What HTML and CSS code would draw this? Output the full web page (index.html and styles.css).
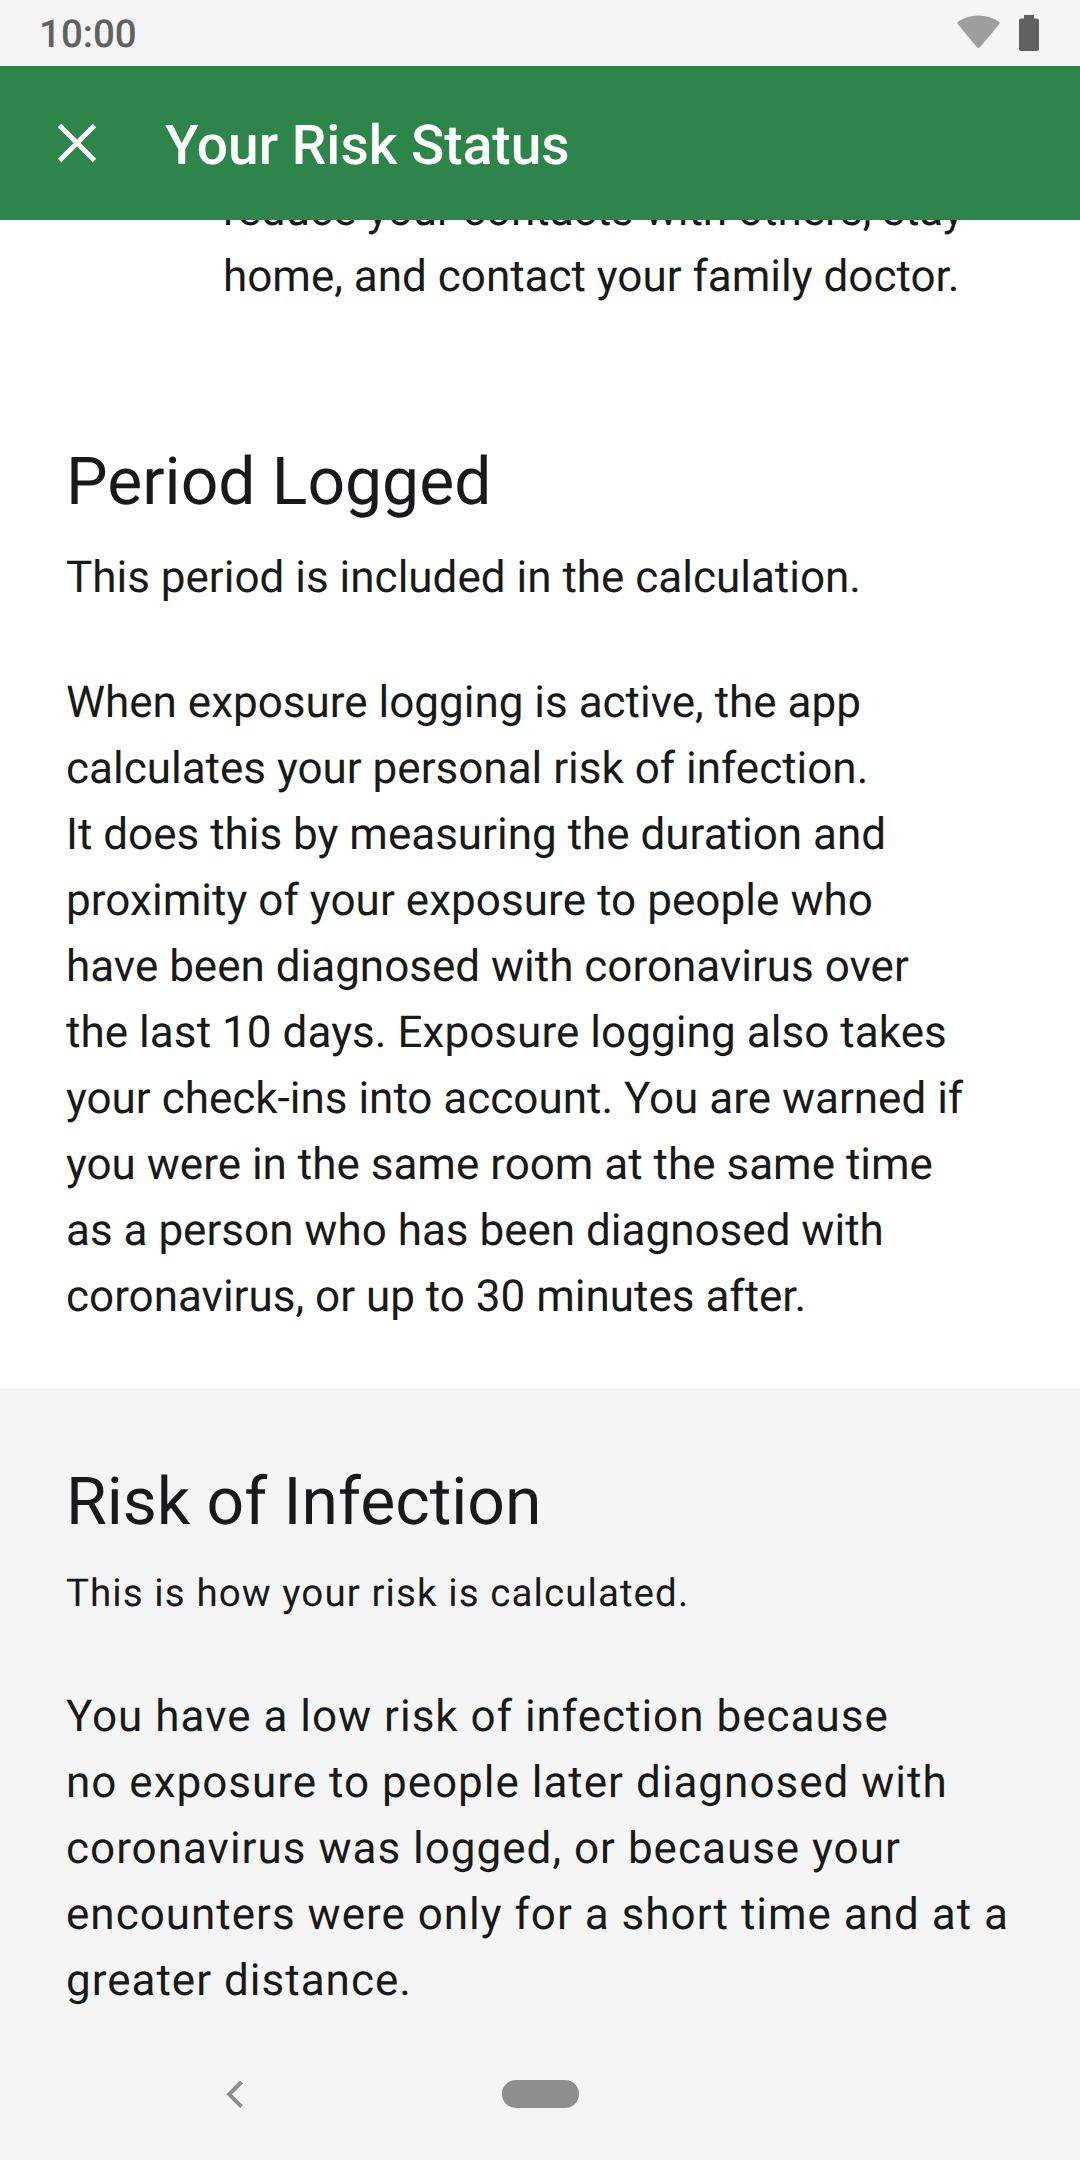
FILE: index.html
```html
<!DOCTYPE html>
<html lang="en">
<head>
<meta charset="utf-8">
<title>Your Risk Status</title>
<link rel="stylesheet" href="styles.css">
</head>
<body>
<div class="screen">
  <div class="status-bar">
    <span class="clock">10:00</span>
    <svg class="status-icons" width="84" height="40" viewBox="0 0 84 40"><path fill="#9e9e9e" d="M2.300 6.500C14-1.500 31-1.500 42.700 6.500Q44.300 7.800 43 9.500L24 32.300Q22.500 33.800 21 32.300L2 9.500Q.7 7.800 2.300 6.500Z"/><path fill="#616161" d="M63 5.500a2 2 0 0 1 2-2h3V0h10v3.500h3a2 2 0 0 1 2 2V34a2 2 0 0 1-2 2H65a2 2 0 0 1-2-2Z"/></svg>
  </div>
  <header class="app-bar">
    <svg class="close" width="40" height="40" viewBox="0 0 40 40"><path d="M2.500 2.500L37.500 37.500M37.500 2.500L2.500 37.500"/></svg>
    <h1 class="title">Your Risk Status</h1>
  </header>
  <main class="content">
    <section class="logged">
      <p class="text advice">reduce your contacts with others, stay<br>home, and contact your family doctor.</p>
      <h2 class="heading">Period Logged</h2>
      <p class="text subtitle">This period is included in the calculation.</p>
      <p class="text">When exposure logging is active, the app<br>calculates your personal risk of infection.<br>It does this by measuring the duration and<br><span class="loose">proximity of your exposure to people who</span><br>have been diagnosed with coronavirus over<br><span class="loose">the last 10 days. Exposure logging also takes</span><br>your check-ins into account. You are warned if<br>you were in the same room at the same time<br>as a person who has been diagnosed with<br>coronavirus, or up to 30 minutes after.</p>
    </section>
    <section class="risk">
      <h2 class="heading">Risk of Infection</h2>
      <p class="caption">This is how your risk is calculated.</p>
      <p class="text spaced">You have a low risk of infection because<br>no exposure to people later diagnosed with<br>coronavirus was logged, or because your<br>encounters were only for a short time and at a<br>greater distance.</p>
    </section>
  </main>
  <nav class="nav-bar">
    <svg class="back" width="20" height="28" viewBox="0 0 20 28"><path d="M16.500 2L4.200 14.300L16.500 26.600"/></svg>
    <span class="home"></span>
  </nav>
</div>
</body>
</html>
```
FILE: styles.css
```css
* { box-sizing: border-box; margin: 0; padding: 0; }
body { width: 1080px; height: 2160px; overflow: hidden; background: #f5f5f5; color: #17191a; font-family: Roboto, sans-serif; text-rendering: geometricPrecision; }
.screen { height: 2160px; display: flex; flex-direction: column; }
.status-bar { height: 66px; flex: none; display: flex; align-items: flex-start; justify-content: space-between; padding: 0 40px 0 39px; }
.clock { font-size: 38.5px; font-weight: 500; line-height: 69px; color: #616161; }
.status-icons { margin-top: 15px; }
.app-bar { height: 154px; flex: none; display: flex; align-items: center; padding-left: 57px; background: #2e854b; color: #fff; }
.close { fill: none; stroke: #fff; stroke-width: 4.8; }
.title { margin-left: 68px; padding-top: 6px; font-size: 55px; font-weight: 500; line-height: 64px; }
.content { flex: 1; min-height: 0; overflow: hidden; }
.logged { display: flow-root; height: 1169px; padding: 0 66px; background: #fff; }
.text { font-size: 44px; line-height: 66px; white-space: nowrap; }
.advice { margin-top: -43px; margin-left: 157px; }
.heading { font-size: 66px; font-weight: 400; line-height: 77px; }
.logged .heading { margin-top: 135px; }
.subtitle { margin: 23px 0 59px; }
.loose { letter-spacing: 0.06px; }
.risk { padding: 75px 66px 0; }
.caption { margin: 23px 0 60px; font-size: 38.5px; line-height: 59px; letter-spacing: 1.08px; }
.spaced { letter-spacing: 1px; }
.nav-bar { height: 132px; flex: none; display: flex; align-items: center; padding-left: 225px; }
.back { fill: none; stroke: #8e8e8e; stroke-width: 4; }
.home { width: 77px; height: 28px; margin-left: 257px; border-radius: 14px; background: #8e8e8e; }
```
